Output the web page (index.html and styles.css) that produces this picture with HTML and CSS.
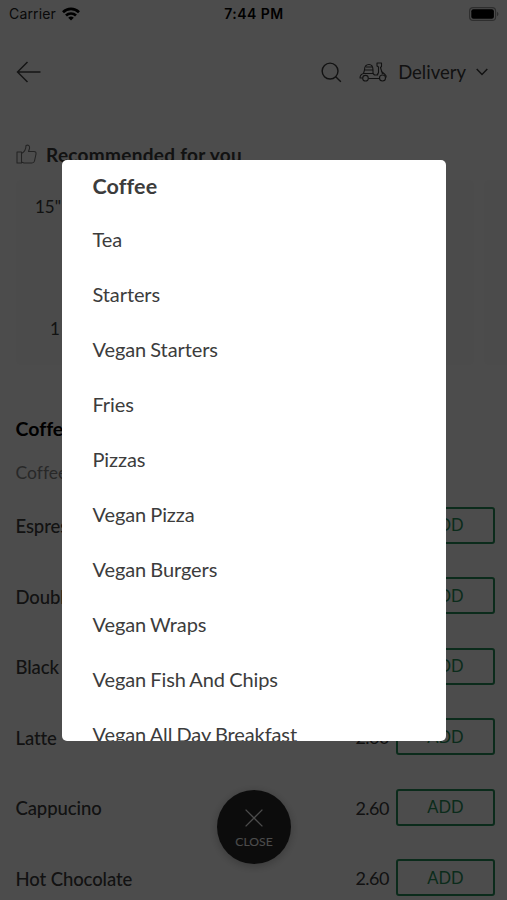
FILE: index.html
```html
<!DOCTYPE html>
<html lang="en">
<head>
    <meta charset="UTF-8">
    <meta name="viewport" content="width=device-width, initial-scale=1.0">
    <title>Menu</title>
    <link rel="stylesheet" href="styles.css">
</head>
<body>
    <div class="status-bar">
        <div class="carrier">
            <span>Carrier</span>
            <svg width="18" height="14" viewBox="0 0 18 14" fill="none" stroke="#000" stroke-width="2.7">
                <path d="M1 5.2a11.5 11.5 0 0 1 16 0"/>
                <path d="M4 8.5a7.2 7.2 0 0 1 10 0"/>
                <path d="M9 13.6l-2.8-2.8a4 4 0 0 1 5.6 0z" fill="#000" stroke="none"/>
            </svg>
        </div>
        <span class="time">7:44 PM</span>
        <svg class="battery" width="30" height="14" viewBox="0 0 30 14">
            <rect x=".6" y=".6" width="26" height="12.8" rx="3.5" fill="none" stroke="#999" stroke-width="1.2"/>
            <rect x="2.3" y="2.3" width="22.6" height="9.4" rx="2"/>
            <path d="M28 4.8c2 .8 2 3.6 0 4.4z" fill="#999"/>
        </svg>
    </div>

    <header class="top-bar">
        <svg width="26" height="22" viewBox="0 0 26 22" fill="none" stroke="#444" stroke-width="1.5">
            <path d="M11.5 1L1.5 11l10 10M1.5 11h23"/>
        </svg>
        <div class="actions">
            <svg class="search" width="21" height="21" viewBox="0 0 22 22" fill="none" stroke="#3c3c3c" stroke-width="1.5">
                <circle cx="9.5" cy="9.5" r="8.3"/>
                <path d="M15.4 15.4l5.4 5.2"/>
            </svg>
            <svg class="scooter" width="28" height="20" viewBox="0 0 28 20" fill="none" stroke="#3c3c3c" stroke-width="1.1" stroke-linejoin="round">
                <path d="M5.500 8C5.500 4.500 7 2.500 10 2.500S14 4.500 14 8zM7 5h6.500M5.500 8L4.500 11.500h9.500V8M4.500 11.500C2.500 12 1 13.500 1 16h2.700"/>
                <path d="M9.300 16.500h11.200M14 11.500l1.500 1.500h3l1-2.500V5L18 4V1h4.500v3.500l-1 1 2 6.500M19.500 10.500L18 13M22 9l4 3.500c1 .8 1.300 2 1.200 3"/>
                <circle cx="6.500" cy="16.200" r="2.800"/>
                <circle cx="23.500" cy="16" r="3"/>
            </svg>
            <span class="mode">Delivery</span>
            <svg width="12" height="8" viewBox="0 0 12 8" fill="none" stroke="#3c3c3c" stroke-width="1.5">
                <path d="M.7 1L6 6.500 11.300 1"/>
            </svg>
        </div>
    </header>

    <section class="recommended">
        <h2>
            <svg width="21" height="20" viewBox="0 0 21 20" fill="none" stroke="#777" stroke-width="1.100" stroke-linejoin="round">
                <path d="M1 8h4.500v11H1zM5.500 9.500C8.500 8 10 5 10 1.500c2.500-1 4 .5 3.500 3L12.500 7.500H18c1.500 0 2.300 1 2 2.500l-1.500 7c-.3 1.300-1 2-2.500 2H8l-2.500-1"/>
            </svg>
            Recommended for you
        </h2>
        <div class="cards">
            <div class="card">
                <span class="card-name">15"</span>
                <span class="card-price">1</span>
            </div>
            <div class="card"></div>
        </div>
    </section>

    <section class="menu">
        <h2>Coffee</h2>
        <p>Coffee</p>
        <div class="item"><span class="name">Espresso</span><span class="price">2.60</span><button>ADD</button></div>
        <div class="item"><span class="name">Double</span><span class="price">2.60</span><button>ADD</button></div>
        <div class="item"><span class="name">Black</span><span class="price">2.60</span><button>ADD</button></div>
        <div class="item"><span class="name">Latte</span><span class="price">2.60</span><button>ADD</button></div>
        <div class="item"><span class="name">Cappucino</span><span class="price">2.60</span><button>ADD</button></div>
        <div class="item"><span class="name">Hot Chocolate</span><span class="price">2.60</span><button>ADD</button></div>
    </section>

    <!-- floating button, sits under the overlay -->
    <div class="close">
        <svg width="18" height="18" viewBox="0 0 18 18" stroke="#fff" stroke-width="1.300">
            <path d="M.6.6l16.800 16.800M17.400.6L.6 17.400"/>
        </svg>
        <span>CLOSE</span>
    </div>

    <div class="overlay">
        <ul class="categories">
            <li class="active">Coffee</li>
            <li>Tea</li>
            <li>Starters</li>
            <li>Vegan Starters</li>
            <li>Fries</li>
            <li>Pizzas</li>
            <li>Vegan Pizza</li>
            <li>Vegan Burgers</li>
            <li>Vegan Wraps</li>
            <li>Vegan Fish And Chips</li>
            <li>Vegan All Day Breakfast</li>
        </ul>
    </div>
</body>
</html>
```
FILE: styles.css
```css
* {
    box-sizing: border-box;
}
body {
    margin: 0;
    height: 900px;
    overflow: hidden;
    position: relative;
    background: #fff;
    color: #3c3c3c;
    font-family: Lato, sans-serif;
    font-size: 18.5px;
    font-variant-ligatures: none;
}
h2, p, ul {
    margin: 0;
    padding: 0;
}
svg {
    display: block;
    flex: none;
}
.status-bar {
    display: grid;
    grid-template-columns: 1fr auto 1fr;
    align-items: center;
    height: 27px;
    padding: 0 8px 0 9px;
    color: #000;
    font-family: Inter, sans-serif;
    font-size: 14px;
}
.carrier {
    display: flex;
    align-items: center;
    gap: 6px;
    color: #222;
    letter-spacing: 0.15px;
}
.time {
    font-weight: 600;
    letter-spacing: 0.45px;
}
.battery {
    justify-self: end;
}
.top-bar {
    display: flex;
    justify-content: space-between;
    align-items: center;
    height: 90px;
    padding: 0 19px 0 16px;
}
.actions {
    display: flex;
    align-items: center;
}
.search {
    margin-right: 17px;
}
.scooter {
    margin-right: 11px;
}
.mode {
    margin-right: 10px;
}
.recommended {
    height: 296px;
    padding: 23px 0 0 16px;
    overflow: hidden;
}
.recommended h2 {
    display: flex;
    align-items: center;
    gap: 9px;
    height: 28px;
    font-size: 19px;
    letter-spacing: 0.3px;
    white-space: nowrap;
}
.cards {
    display: flex;
    gap: 10px;
    margin-top: 12px;
}
.card {
    flex: none;
    display: flex;
    flex-direction: column;
    justify-content: space-between;
    width: 458px;
    height: 185px;
    padding: 16px 18px 26px 19px;
    border-radius: 5px;
    background: #fafafa;
    font-size: 17px;
}
.card-price {
    padding-left: 15px;
}
.menu {
    padding: 0 12px 0 15.500px;
}
.menu h2 {
    height: 32px;
    line-height: 32px;
    color: #000;
    font-size: 19.5px;
}
.menu p {
    height: 45px;
    line-height: 56px;
    color: #888;
    font-size: 17.5px;
}
.item {
    display: flex;
    align-items: center;
    height: 70.500px;
}
.name {
    flex: 1;
    padding-top: 2px;
    font-weight: 500;
    letter-spacing: -0.1px;
}
.price {
    margin-right: 7px;
    padding-top: 1px;
    font-size: 18px;
    letter-spacing: -0.5px;
}
.item button {
    width: 99px;
    height: 37px;
    padding: 0;
    border: 2px solid #27925a;
    border-radius: 3px;
    background: none;
    color: #27925a;
    font-family: Lato, sans-serif;
    font-size: 16.500px;
}
.close {
    position: absolute;
    left: 217px;
    top: 790px;
    width: 74px;
    height: 74px;
    padding-top: 19px;
    border-radius: 50%;
    background: #2b2b2b;
    box-shadow: 0 2px 10px rgba(0, 0, 0, 0.25);
    color: #fff;
    font-size: 12.200px;
    display: flex;
    flex-direction: column;
    align-items: center;
    gap: 7px;
}
.overlay {
    position: absolute;
    inset: 0;
    padding: 160px 61px 159px 62px;
    background: rgba(0, 0, 0, 0.7);
}
.categories {
    height: 581px;
    overflow: hidden;
    border-radius: 5px;
    background: #fff;
    list-style: none;
    padding-left: 30.500px;
    font-size: 20px;
    letter-spacing: -0.1px;
    word-spacing: -0.8px;
}
.categories li {
    height: 55px;
    line-height: 54px;
}
.categories .active {
    height: 52px;
    line-height: 53px;
    font-size: 21.500px;
    font-weight: 700;
    letter-spacing: 0.1px;
}
```
